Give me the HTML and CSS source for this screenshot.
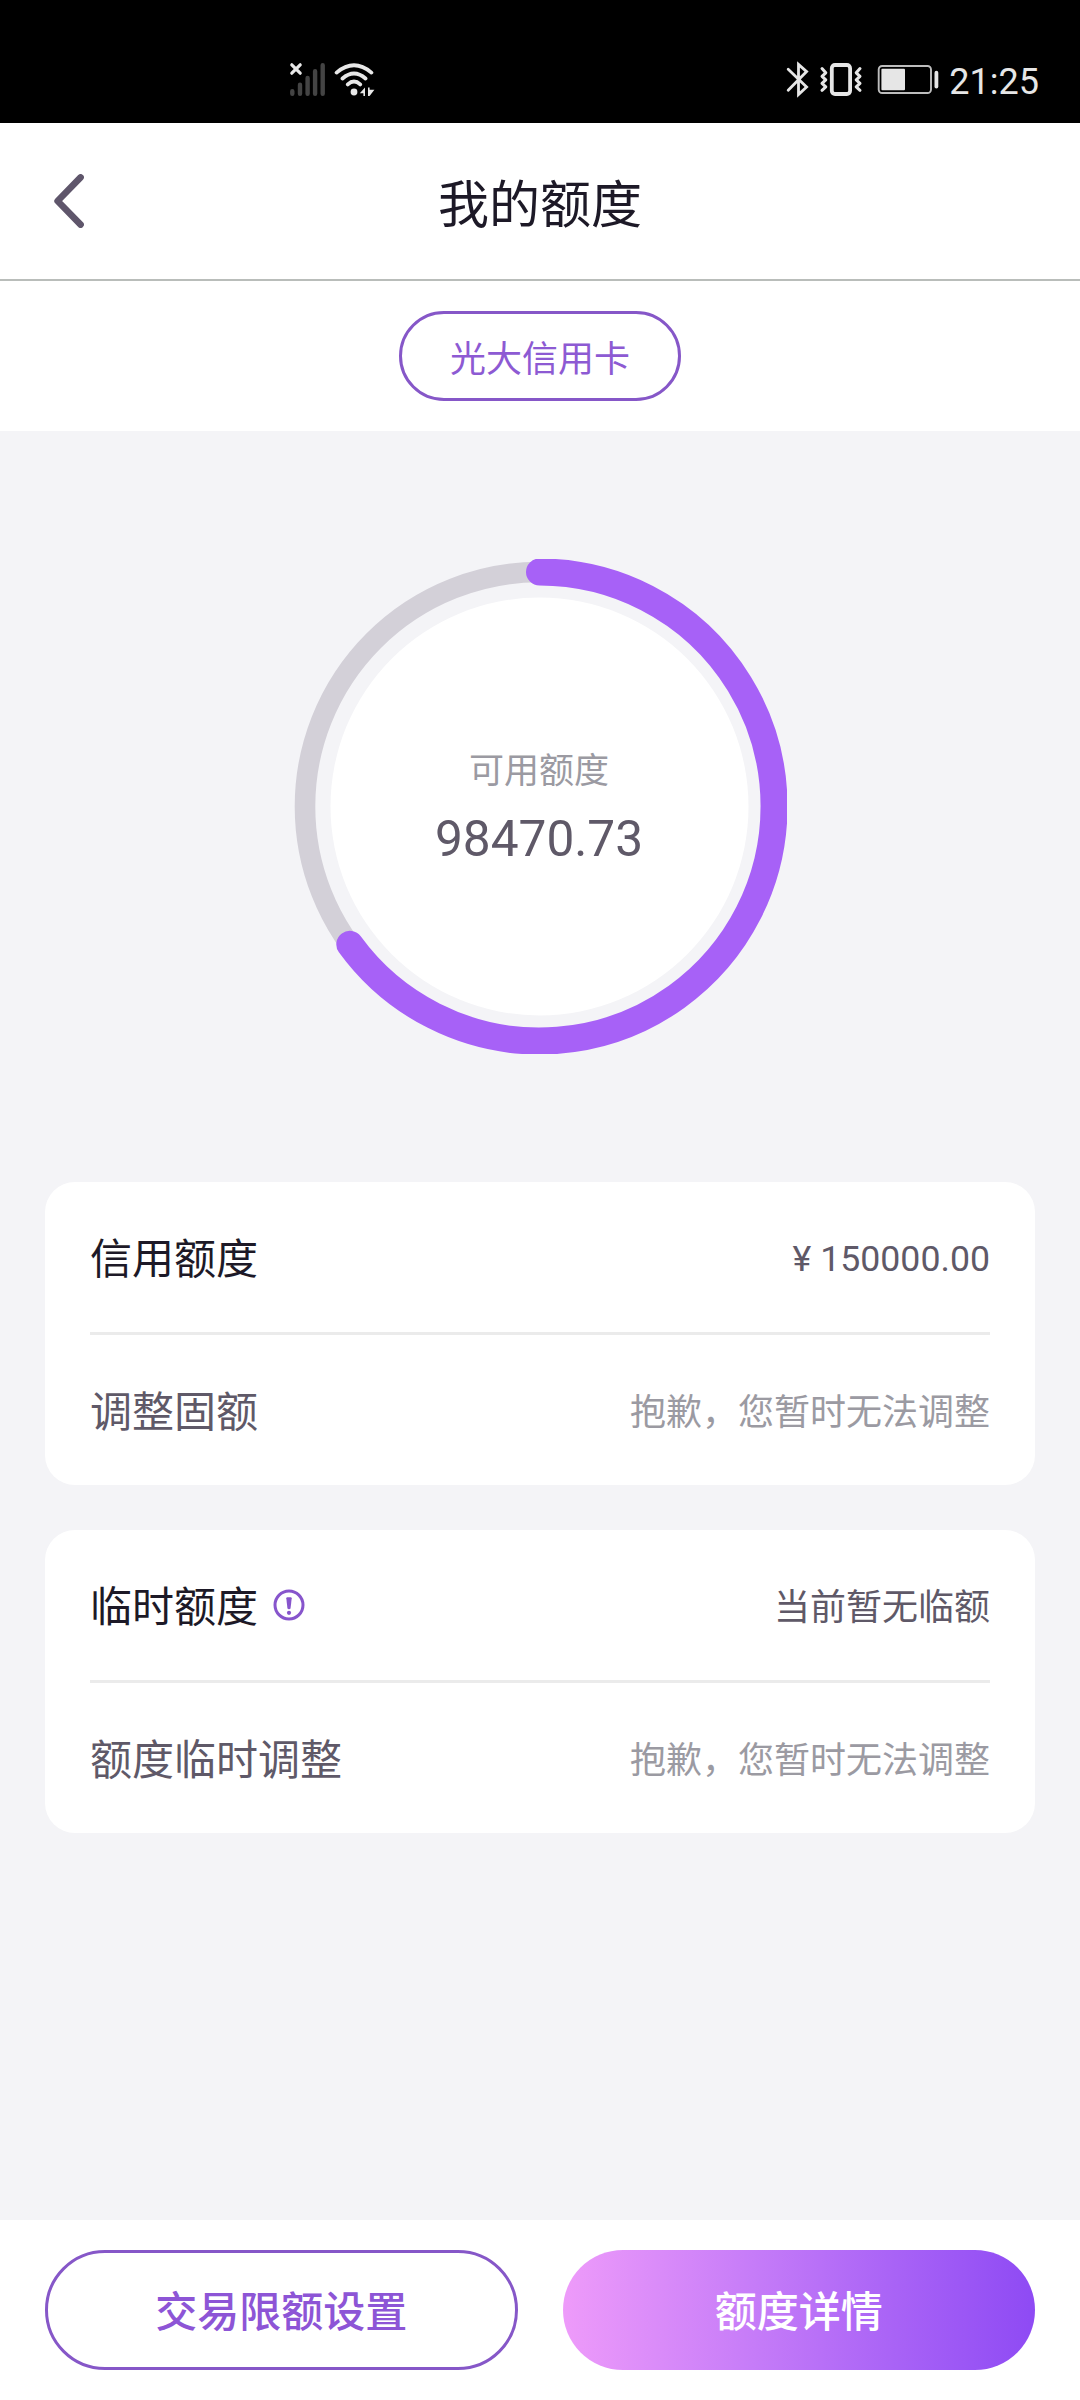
FILE: index.html
```html
<!DOCTYPE html>
<html lang="zh-CN">
<head>
<meta charset="utf-8">
<title>我的额度</title>
<link rel="stylesheet" href="styles.css">
</head>
<body>
<div class="status">
  <svg class="status-left" width="90" height="40" viewBox="288 60 90 40" fill="none" stroke-linecap="round">
    <g stroke="#444" stroke-width="4.4">
      <path d="M292.3 91.3v2.4M300 84.7v9M307.6 78v15.7M315.1 71.3v22.4M322.7 65.3v28.4"/>
    </g>
    <g stroke="#e8e8e8" stroke-width="3.2">
      <path d="M291.8 64.8l8.4 8.4M300.2 64.8l-8.4 8.4"/>
      <path stroke-width="3.8" d="M336.6 72.6Q354 58 371.4 72.6M342.5 78.5Q354 68.5 365.5 78.5M347.8 84.4Q354 78.8 360.2 84.4"/>
    </g>
    <circle cx="354" cy="92" r="3.4" fill="#e8e8e8"/>
    <path d="M359.8 93.2L365 87.5V96h-1.6v-2.8zM368 87.5h1.6v2.3h4.8L369.6 96H368z" fill="#e8e8e8"/>
  </svg>
  <div class="status-right">
    <svg width="156" height="40" viewBox="785 60 156 40" fill="none" stroke="#e6e6e6" stroke-linecap="round">
      <path stroke-width="2.8" stroke-linejoin="miter" d="M788.2 69.3L806.6 87L798.5 94.6V64.4L806.6 71.6L788.2 90.2"/>
      <rect x="831.8" y="65" width="18.3" height="29" rx="3.2" stroke-width="3.8"/>
      <path stroke-width="3" stroke-linejoin="round" d="M822 68.5l3.8 4.3-3.8 3.5 3.8 3.6-3.8 3.5 3.8 3.5-3.8 3.4M860 68.5l-3.8 4.3 3.8 3.5-3.8 3.6 3.8 3.5-3.8 3.5 3.8 3.4"/>
      <rect x="878.7" y="66" width="52.3" height="27" rx="3.5" stroke="#bdbdbd" stroke-width="1.9"/>
      <rect x="881.4" y="68.8" width="23.6" height="21.4" rx="1" fill="#e6e6e6" stroke="none"/>
      <path stroke-width="3.8" d="M936.4 72.7v13.8"/>
    </svg>
    <span class="clock">21:25</span>
  </div>
</div>

<header class="header">
  <svg class="back" width="30" height="54" viewBox="0 0 30 54" fill="none">
    <path d="M26.6 3.4L3.6 27L26.6 50.6" stroke="#5f566b" stroke-width="6.6" stroke-linecap="round" stroke-linejoin="round"/>
  </svg>
  <h1>我的额度</h1>
</header>

<nav class="tabs"><button class="tab">光大信用卡</button></nav>

<main class="main">
  <section class="gauge">
    <svg class="ring" width="495" height="495" viewBox="0 0 495 495" fill="none">
      <circle cx="247.5" cy="247.5" r="209" fill="#fff"/>
      <circle cx="247.5" cy="247.5" r="234.5" stroke="#d3d0d8" stroke-width="20.6"/>
      <path d="M247.5 13A234.5 234.5 0 1 1 57.8 385.3" stroke="#a761f7" stroke-width="27" stroke-linecap="round"/>
    </svg>
    <div class="gauge-text">
      <span class="gauge-label">可用额度</span>
      <span class="gauge-value">98470.73</span>
    </div>
  </section>

  <section class="card">
    <div class="row">
      <span class="label strong">信用额度</span>
      <span class="value amount">¥ 150000.00</span>
    </div>
    <div class="row">
      <span class="label">调整固额</span>
      <span class="value muted">抱歉，您暂时无法调整</span>
    </div>
  </section>

  <section class="card">
    <div class="row">
      <span class="label strong">临时额度</span>
      <svg class="info" width="32" height="32" viewBox="0 0 32 32" fill="#8755cc">
        <circle cx="16" cy="16" r="14" fill="none" stroke="#8755cc" stroke-width="3"/>
        <path d="M13.3 9.2Q13.3 8.2 14.3 8.2H17.7Q18.7 8.2 18.7 9.2L17.6 19Q17.4 20.2 16 20.2T14.4 19z"/>
        <circle cx="16" cy="23.8" r="2.1"/>
      </svg>
      <span class="value">当前暂无临额</span>
    </div>
    <div class="row">
      <span class="label">额度临时调整</span>
      <span class="value muted">抱歉，您暂时无法调整</span>
    </div>
  </section>
</main>

<footer class="footer">
  <button class="btn outline">交易限额设置</button>
  <button class="btn primary">额度详情</button>
</footer>
</body>
</html>
```
FILE: styles.css
```css
* { box-sizing: border-box; }

body {
  margin: 0;
  width: 1080px;
  height: 2400px;
  display: flex;
  flex-direction: column;
  background: #f4f4f7;
  color: #5f5968;
  font-family: "Noto Sans CJK SC", sans-serif;
}

button {
  font-family: inherit;
  margin: 0;
}

svg { display: block; flex: none; }

.status {
  height: 123px;
  flex: none;
  display: flex;
  justify-content: space-between;
  align-items: flex-start;
  padding: 60px 41px 0 288px;
  background: #000;
}

.status-right {
  display: flex;
  gap: 8px;
}

.clock {
  padding-top: 1px;
  color: #e6e6e6;
  font: 36px/42px Roboto, sans-serif;
}

.header {
  height: 158px;
  flex: none;
  display: grid;
  grid-template-columns: 84px 1fr 84px;
  align-items: center;
  background: #fff;
  border-bottom: 2px solid #b9bdba;
}

.back { justify-self: end; }

.header h1 {
  margin: 0;
  color: #1d1927;
  font-size: 51px;
  font-weight: 400;
  line-height: 74px;
  text-align: center;
}

.tabs {
  height: 150px;
  flex: none;
  display: flex;
  justify-content: center;
  align-items: center;
  background: #fff;
}

.tab {
  width: 282px;
  height: 90px;
  padding: 0;
  border: 3px solid #8657c8;
  border-radius: 45px;
  background: #fff;
  color: #8d5ad3;
  font-size: 36px;
  line-height: 52px;
}

.main {
  flex: 1;
  padding: 128px 45px 0;
}

.gauge {
  display: grid;
  width: 495px;
  margin: 0 auto 128px 247px;
}

.ring,
.gauge-text { grid-area: 1 / 1; }

.gauge-text {
  display: flex;
  flex-direction: column;
  align-items: center;
  padding: 184px 1px 0 0;
}

.gauge-label {
  color: #9b9aa2;
  font-size: 35px;
  line-height: 50px;
}

.gauge-value {
  margin-top: 17px;
  font: 49.6px/58px Roboto, sans-serif;
}

.card {
  margin-bottom: 45px;
  padding: 0 45px;
  border-radius: 30px;
  background: #fff;
}

.row {
  height: 150px;
  display: flex;
  align-items: center;
}

.row + .row {
  height: 153px;
  border-top: 3px solid #ebebeb;
}

.label {
  padding-bottom: 2px;
  font-size: 42px;
  line-height: 60px;
}

.strong { color: #1d1927; }

.info { margin: 0 0 1px 14.5px; }

.value {
  margin-left: auto;
  padding-bottom: 2px;
  font-size: 36px;
  line-height: 52px;
}

.amount {
  padding: 3px 0 0;
  font-family: Roboto, sans-serif;
  font-size: 35.7px;
}

.muted { color: #9b9aa2; }

.footer {
  height: 180px;
  flex: none;
  display: grid;
  grid-template-columns: 1fr 1fr;
  gap: 45px;
  padding: 30px 45px;
  background: #fff;
}

.btn {
  padding: 0 0 2px;
  border: 0;
  border-radius: 60px;
  font-size: 42px;
  font-weight: 500;
  line-height: 60px;
}

.outline {
  border: 3px solid #8657c8;
  background: #fff;
  color: #8d55d6;
}

.primary {
  background: linear-gradient(90deg, #ee9bfa 0%, #c67cf8 40%, #a963f6 70%, #8e4af4 100%);
  color: #fff;
}
```
